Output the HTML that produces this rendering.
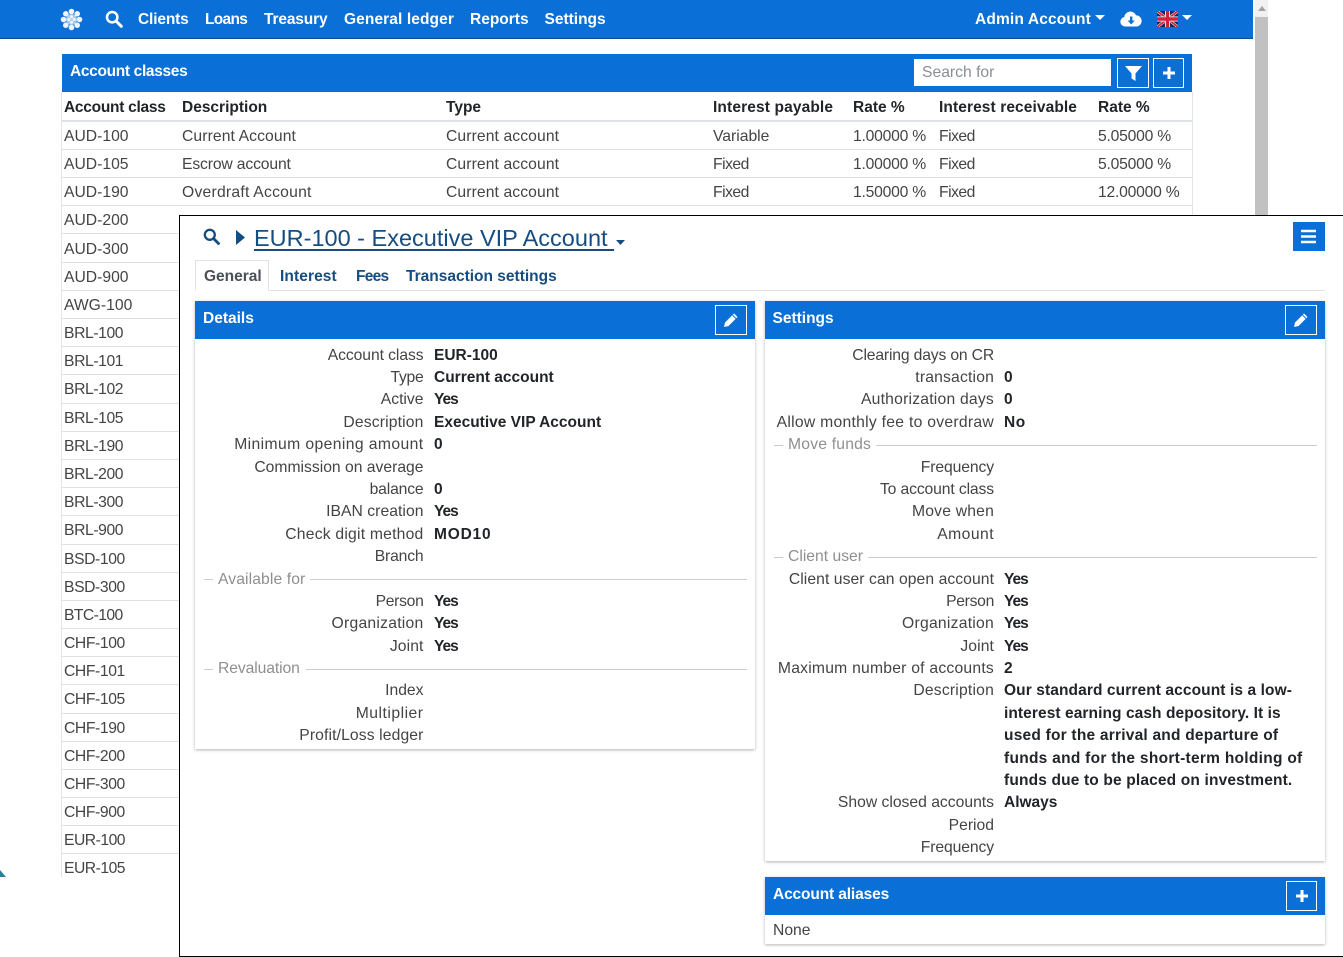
<!DOCTYPE html>
<html lang="en"><head><meta charset="utf-8"><title>Account classes</title>
<style>
html,body{margin:0;padding:0;background:#fff}
#p{position:relative;width:1343px;height:957px;overflow:hidden;font-family:"Liberation Sans",sans-serif;font-size:15.7px;color:#444;background:#fff}
.a{position:absolute}
.t{position:absolute;line-height:22px;white-space:nowrap}
.b{font-weight:bold;font-size:15.5px;color:#212529}
.w{color:#fff;font-weight:bold;font-size:15.5px}
.l{left:195px;width:228.5px;text-align:right}
.m{left:765px;width:229px;text-align:right}
.v{left:434px}.n{left:1004px}
.g{color:#8f8f8f}
.hl{position:absolute;height:1px;background:#ccc}
.rl{position:absolute;left:62px;height:1px;background:#dee2e6;width:1130px}
.bar{position:absolute;background:#0a6fd6}
.btn{position:absolute;box-sizing:border-box;border:1px solid #fff;width:32px;height:30px;display:flex;align-items:center;justify-content:center}
.card{position:absolute;background:#fff;box-shadow:0 1px 3px rgba(0,0,0,.3)}
.tab{color:#154d80;font-weight:bold;font-size:15.5px}
.i{letter-spacing:-.4px}
.y{letter-spacing:-1px}
.f{letter-spacing:-.5px}
.r{letter-spacing:-.22px}
.c{letter-spacing:.1px}
</style></head><body><div id="p">

<!-- top nav -->
<div class="a" style="left:0;top:0;width:1253px;height:39px;background:#0a6fd6;border-bottom:1px solid #0b4f96;box-sizing:border-box"></div>
<svg class="a" style="left:60px;top:8px" width="23" height="23" viewBox="0 0 23 23"><g fill="#eef5fc"><circle cx="11.5" cy="3.500" r="2.800"/><circle cx="17.200" cy="5.800" r="2.800"/><circle cx="19.500" cy="11.5" r="2.800"/><circle cx="17.200" cy="17.200" r="2.800"/><circle cx="11.5" cy="19.500" r="2.800"/><circle cx="5.800" cy="17.200" r="2.800"/><circle cx="3.500" cy="11.5" r="2.800"/><circle cx="5.800" cy="5.800" r="2.800"/><circle cx="11.5" cy="11.5" r="5.500" fill="#a9cdf2"/><circle cx="11.5" cy="8.800" r="1.500"/><circle cx="11.5" cy="14.200" r="1.500"/><circle cx="8.800" cy="11.5" r="1.500"/><circle cx="14.200" cy="11.5" r="1.500"/></g></svg>
<svg class="a" style="left:105px;top:10px" width="18" height="18" viewBox="0 0 18 18"><circle cx="7.2" cy="7.2" r="5.2" fill="none" stroke="#fff" stroke-width="2.5"/><path d="M11 11l5.3 5.3" stroke="#fff" stroke-width="3" stroke-linecap="round"/></svg>
<div class="t w" style="left:138px;top:9px;letter-spacing:-.15px">Clients</div>
<div class="t w" style="left:205px;top:9px;letter-spacing:-.7px">Loans</div>
<div class="t w" style="left:264px;top:9px;letter-spacing:-.15px">Treasury</div>
<div class="t w" style="left:344px;top:9px;letter-spacing:.1px">General ledger</div>
<div class="t w" style="left:470px;top:9px">Reports</div>
<div class="t w" style="left:544.500px;top:9px">Settings</div>
<div class="t w" style="left:975px;top:9px;letter-spacing:.15px">Admin Account</div>
<svg class="a" style="left:1095px;top:15px" width="10" height="6"><path d="M0 0h10L5 5z" fill="#fff"/></svg>
<svg class="a" style="left:1120px;top:10px" width="22" height="17" viewBox="0 0 22 17"><path d="M5 16.500a4.800 4.800 0 0 1-.8-9.500A6.200 6.200 0 0 1 16 5.200 5.700 5.700 0 0 1 17 16.500z" fill="#fff"/><path d="M10 6.500h2.400v4h2.300l-3.500 4-3.500-4H10z" fill="#0a6fd6"/></svg>
<svg class="a" style="left:1157px;top:11px" width="21" height="16" viewBox="0 0 21 16"><rect width="21" height="16" fill="#1a2260"/><path d="M0 0l21 16M21 0L0 16" stroke="#fff" stroke-width="2.800"/><path d="M0 0l21 16M21 0L0 16" stroke="#d3213a" stroke-width="1.800"/><path d="M10.500 0v16M0 8h21" stroke="#fff" stroke-width="5"/><path d="M10.500 0v16M0 8h21" stroke="#d3213a" stroke-width="3.400"/></svg>
<svg class="a" style="left:1182px;top:15px" width="10" height="6"><path d="M0 0h10L5 5z" fill="#fff"/></svg>

<!-- scrollbar -->
<div class="a" style="left:1255px;top:0;width:13px;height:216px;background:#f1f1f1"></div>
<div class="a" style="left:1255px;top:17px;width:13px;height:199px;background:#c1c1c1"></div>
<svg class="a" style="left:1258px;top:6px" width="8" height="5"><path d="M0 5L4 0l4 5z" fill="#a3a3a3"/></svg>

<!-- account classes -->
<div class="bar" style="left:62px;top:54px;width:1130px;height:38px"></div>
<div class="t w" style="left:70px;top:61px;letter-spacing:-.33px">Account classes</div>
<div class="a" style="left:914px;top:59px;width:197px;height:27px;background:#fff"></div>
<div class="t" style="left:922px;top:62px;color:#8a8f94">Search for</div>
<div class="btn" style="left:1117px;top:58px"><svg width="17" height="15" viewBox="0 0 17 15"><path d="M0 0h17L10.500 7.500V15l-4-2.500V7.500z" fill="#fff"/></svg></div>
<div class="btn" style="left:1153px;top:58px;width:31px"><svg width="14" height="14" viewBox="0 0 14 14"><path d="M7 1v12M1 7h12" stroke="#fff" stroke-width="3"/></svg></div>

<div class="a" style="left:61px;top:92px;width:1px;height:785px;background:#e4e4e4"></div>
<div class="a" style="left:1192px;top:92px;width:1px;height:124px;background:#e4e4e4"></div>
<div class="a" style="left:62px;top:120px;width:1130px;height:2px;background:#dee2e6"></div>

<div class="t b" style="left:64px;top:97px;letter-spacing:-.27px">Account class</div>
<div class="t b" style="left:182px;top:97px">Description</div>
<div class="t b" style="left:446px;top:97px">Type</div>
<div class="t b" style="left:713px;top:97px;letter-spacing:.13px">Interest payable</div>
<div class="t b" style="left:853px;top:97px">Rate %</div>
<div class="t b" style="left:939px;top:97px;letter-spacing:.1px">Interest receivable</div>
<div class="t b" style="left:1098px;top:97px">Rate %</div>

<div class="t c" style="left:182px;top:126px">Current Account</div>
<div class="t c" style="left:446px;top:126px">Current account</div>
<div class="t" style="left:713px;top:126px">Variable</div>
<div class="t r" style="left:853px;top:126px">1.00000 %</div>
<div class="t f" style="left:939px;top:126px">Fixed</div>
<div class="t r" style="left:1098px;top:126px">5.05000 %</div>
<div class="t" style="left:182px;top:154px;letter-spacing:-.14px">Escrow account</div>
<div class="t c" style="left:446px;top:154px">Current account</div>
<div class="t f" style="left:713px;top:154px">Fixed</div>
<div class="t r" style="left:853px;top:154px">1.00000 %</div>
<div class="t f" style="left:939px;top:154px">Fixed</div>
<div class="t r" style="left:1098px;top:154px">5.05000 %</div>
<div class="t" style="left:182px;top:182px;letter-spacing:.24px">Overdraft Account</div>
<div class="t c" style="left:446px;top:182px">Current account</div>
<div class="t f" style="left:713px;top:182px">Fixed</div>
<div class="t r" style="left:853px;top:182px">1.50000 %</div>
<div class="t f" style="left:939px;top:182px">Fixed</div>
<div class="t r" style="left:1098px;top:182px">12.00000 %</div>

<div class="t" style="left:64px;top:126px">AUD-100</div>
<div class="t" style="left:64px;top:154px">AUD-105</div>
<div class="t" style="left:64px;top:182px">AUD-190</div>
<div class="t" style="left:64px;top:210px">AUD-200</div>
<div class="t" style="left:64px;top:239px">AUD-300</div>
<div class="t" style="left:64px;top:267px">AUD-900</div>
<div class="t" style="left:64px;top:295px">AWG-100</div>
<div class="t i" style="left:64px;top:323px">BRL-100</div>
<div class="t i" style="left:64px;top:351px">BRL-101</div>
<div class="t i" style="left:64px;top:379px">BRL-102</div>
<div class="t i" style="left:64px;top:408px">BRL-105</div>
<div class="t i" style="left:64px;top:436px">BRL-190</div>
<div class="t i" style="left:64px;top:464px">BRL-200</div>
<div class="t i" style="left:64px;top:492px">BRL-300</div>
<div class="t i" style="left:64px;top:520px">BRL-900</div>
<div class="t i" style="left:64px;top:549px">BSD-100</div>
<div class="t i" style="left:64px;top:577px">BSD-300</div>
<div class="t i" style="left:64px;top:605px;letter-spacing:-.6px">BTC-100</div>
<div class="t i" style="left:64px;top:633px">CHF-100</div>
<div class="t i" style="left:64px;top:661px">CHF-101</div>
<div class="t i" style="left:64px;top:689px">CHF-105</div>
<div class="t i" style="left:64px;top:718px">CHF-190</div>
<div class="t i" style="left:64px;top:746px">CHF-200</div>
<div class="t i" style="left:64px;top:774px">CHF-300</div>
<div class="t i" style="left:64px;top:802px">CHF-900</div>
<div class="t i" style="left:64px;top:830px;letter-spacing:-.5px">EUR-100</div>
<div class="t i" style="left:64px;top:858px;letter-spacing:-.5px">EUR-105</div>

<div class="rl" style="top:149px"></div><div class="rl" style="top:177px"></div><div class="rl" style="top:205px"></div><div class="rl" style="top:233px"></div><div class="rl" style="top:262px"></div><div class="rl" style="top:290px"></div><div class="rl" style="top:318px"></div><div class="rl" style="top:346px"></div><div class="rl" style="top:374px"></div><div class="rl" style="top:403px"></div><div class="rl" style="top:431px"></div><div class="rl" style="top:459px"></div><div class="rl" style="top:487px"></div><div class="rl" style="top:515px"></div><div class="rl" style="top:544px"></div><div class="rl" style="top:572px"></div><div class="rl" style="top:600px"></div><div class="rl" style="top:628px"></div><div class="rl" style="top:656px"></div><div class="rl" style="top:684px"></div><div class="rl" style="top:713px"></div><div class="rl" style="top:741px"></div><div class="rl" style="top:769px"></div><div class="rl" style="top:797px"></div><div class="rl" style="top:825px"></div><div class="rl" style="top:853px"></div>

<svg class="a" style="left:0;top:870px" width="6" height="7"><path d="M0 0l6 7H0z" fill="#2a7f9e"/></svg>

<!-- overlay -->
<div class="a" style="left:179px;top:215px;width:1164px;height:742px;box-sizing:border-box;border:1px solid #000;border-right:0;background:#fff"></div>

<svg class="a" style="left:203px;top:228px" width="17" height="17" viewBox="0 0 17 17"><circle cx="6.800" cy="6.800" r="5" fill="none" stroke="#154d80" stroke-width="2.300"/><path d="M10.500 10.500l5 5" stroke="#154d80" stroke-width="2.800" stroke-linecap="round"/></svg>
<svg class="a" style="left:236px;top:230px" width="9" height="15"><path d="M0 0l9 7.500L0 15z" fill="#154d80"/></svg>
<div class="t" style="left:254px;top:221.500px;line-height:32px;font-size:23.5px;color:#154d80;text-decoration:underline;text-decoration-thickness:1.500px;text-underline-offset:3px;white-space:pre">EUR-100 - Executive VIP Account </div>
<svg class="a" style="left:616px;top:240px" width="9" height="5"><path d="M0 0h9L4.500 5z" fill="#154d80"/></svg>
<div class="a" style="left:1293px;top:222px;width:32px;height:29px;background:#0a6fd6"></div>
<svg class="a" style="left:1301px;top:229px" width="16" height="15"><path d="M0 2h15M0 7.500h15M0 13h15" stroke="#fff" stroke-width="2.600"/></svg>

<!-- tabs -->
<div class="a" style="left:195px;top:290px;width:1130px;height:1px;background:#dee2e6"></div>
<div class="a" style="left:195px;top:260px;width:74px;height:31px;box-sizing:border-box;border:1px solid #dee2e6;border-bottom:1px solid #fff;background:#fff"></div>
<div class="t b" style="left:204px;top:266px;color:#495057">General</div>
<div class="t tab" style="left:280px;top:266px;letter-spacing:.1px">Interest</div>
<div class="t tab" style="left:356px;top:266px;letter-spacing:-.75px">Fees</div>
<div class="t tab" style="left:406px;top:266px">Transaction settings</div>

<!-- Details -->
<div class="card" style="left:195px;top:301px;width:560px;height:448px"></div>
<div class="bar" style="left:195px;top:301px;width:560px;height:38px"></div>
<div class="t w" style="left:203px;top:308px">Details</div>
<div class="btn" style="left:715px;top:305px"><svg width="16" height="16" viewBox="0 0 16 16"><path d="M11 1.500l3.500 3.500-9 9L1 15l1-4.500z" fill="#fff"/><path d="M9.500 3l3.500 3.500" stroke="#0a6fd6" stroke-width="1"/></svg></div>

<div class="t l" style="top:345px;letter-spacing:-.08px">Account class</div><div class="t b v" style="top:345px">EUR-100</div>
<div class="t l" style="top:367px;letter-spacing:-.25px">Type</div><div class="t b v" style="top:367px">Current account</div>
<div class="t l" style="top:389px">Active</div><div class="t b v y" style="top:389px">Yes</div>
<div class="t l" style="top:412px;letter-spacing:.15px">Description</div><div class="t b v" style="top:412px">Executive VIP Account</div>
<div class="t l" style="top:434px;letter-spacing:.4px">Minimum opening amount</div><div class="t b v" style="top:434px">0</div>
<div class="t l" style="top:457px">Commission on average</div>
<div class="t l" style="top:479px;letter-spacing:-.15px">balance</div><div class="t b v" style="top:479px">0</div>
<div class="t l" style="top:501px;letter-spacing:.05px">IBAN creation</div><div class="t b v y" style="top:501px">Yes</div>
<div class="t l" style="top:524px;letter-spacing:.22px">Check digit method</div><div class="t b v" style="top:524px;letter-spacing:.8px">MOD10</div>
<div class="t l" style="top:546px;letter-spacing:-.15px">Branch</div>
<div class="hl" style="left:204px;top:579px;width:9px"></div><div class="t g" style="left:218px;top:569px;letter-spacing:.1px">Available for</div><div class="hl" style="left:310px;top:579px;width:437px"></div>
<div class="t l" style="top:591px;letter-spacing:-.3px">Person</div><div class="t b v y" style="top:591px">Yes</div>
<div class="t l" style="top:613px;letter-spacing:.25px">Organization</div><div class="t b v y" style="top:613px">Yes</div>
<div class="t l" style="top:636px;letter-spacing:.1px">Joint</div><div class="t b v y" style="top:636px">Yes</div>
<div class="hl" style="left:204px;top:669px;width:9px"></div><div class="t g" style="left:218px;top:658px;letter-spacing:-.1px">Revaluation</div><div class="hl" style="left:306px;top:669px;width:441px"></div>
<div class="t l" style="top:680px">Index</div>
<div class="t l" style="top:703px;letter-spacing:.5px">Multiplier</div>
<div class="t l" style="top:725px;letter-spacing:.12px">Profit/Loss ledger</div>

<!-- Settings -->
<div class="card" style="left:765px;top:301px;width:560px;height:560px"></div>
<div class="bar" style="left:765px;top:301px;width:560px;height:38px"></div>
<div class="t w" style="left:772.500px;top:308px">Settings</div>
<div class="btn" style="left:1285px;top:305px"><svg width="16" height="16" viewBox="0 0 16 16"><path d="M11 1.500l3.500 3.500-9 9L1 15l1-4.500z" fill="#fff"/><path d="M9.500 3l3.500 3.500" stroke="#0a6fd6" stroke-width="1"/></svg></div>

<div class="t m" style="top:345px;letter-spacing:-.16px">Clearing days on CR</div>
<div class="t m" style="top:367px;letter-spacing:.18px">transaction</div><div class="t b n" style="top:367px">0</div>
<div class="t m" style="top:389px;letter-spacing:.22px">Authorization days</div><div class="t b n" style="top:389px">0</div>
<div class="t m" style="top:412px;letter-spacing:.28px">Allow monthly fee to overdraw</div><div class="t b n" style="top:412px;letter-spacing:.5px">No</div>
<div class="hl" style="left:774px;top:445px;width:9px"></div><div class="t g" style="left:788px;top:434px;letter-spacing:.2px">Move funds</div><div class="hl" style="left:876px;top:445px;width:441px"></div>
<div class="t m" style="top:457px;letter-spacing:-.1px">Frequency</div>
<div class="t m" style="top:479px;letter-spacing:-.12px">To account class</div>
<div class="t m" style="top:501px;letter-spacing:.2px">Move when</div>
<div class="t m" style="top:524px;letter-spacing:.45px">Amount</div>
<div class="hl" style="left:774px;top:557px;width:9px"></div><div class="t g" style="left:788px;top:546px">Client user</div><div class="hl" style="left:868px;top:557px;width:449px"></div>
<div class="t m" style="top:569px;letter-spacing:.07px">Client user can open account</div><div class="t b n y" style="top:569px">Yes</div>
<div class="t m" style="top:591px;letter-spacing:-.3px">Person</div><div class="t b n y" style="top:591px">Yes</div>
<div class="t m" style="top:613px;letter-spacing:.25px">Organization</div><div class="t b n y" style="top:613px">Yes</div>
<div class="t m" style="top:636px;letter-spacing:.1px">Joint</div><div class="t b n y" style="top:636px">Yes</div>
<div class="t m" style="top:658px;letter-spacing:.23px">Maximum number of accounts</div><div class="t b n" style="top:658px">2</div>
<div class="t m" style="top:680px;letter-spacing:.2px">Description</div>
<div class="t b n" style="top:680px;letter-spacing:.1px">Our standard current account is a low-</div>
<div class="t b n" style="top:703px;letter-spacing:.08px">interest earning cash depository. It is</div>
<div class="t b n" style="top:725px;letter-spacing:.22px">used for the arrival and departure of</div>
<div class="t b n" style="top:748px;letter-spacing:.28px">funds and for the short-term holding of</div>
<div class="t b n" style="top:770px;letter-spacing:.16px">funds due to be placed on investment.</div>
<div class="t m" style="top:792px">Show closed accounts</div><div class="t b n" style="top:792px">Always</div>
<div class="t m" style="top:815px">Period</div>
<div class="t m" style="top:837px;letter-spacing:-.1px">Frequency</div>

<!-- Aliases -->
<div class="card" style="left:765px;top:877px;width:560px;height:67px"></div>
<div class="bar" style="left:765px;top:877px;width:560px;height:38px"></div>
<div class="t w" style="left:773px;top:884px;letter-spacing:-.13px">Account aliases</div>
<div class="btn" style="left:1286px;top:881px;width:31px"><svg width="14" height="14" viewBox="0 0 14 14"><path d="M7 1v12M1 7h12" stroke="#fff" stroke-width="3"/></svg></div>
<div class="t" style="left:773px;top:920px">None</div>

</div></body></html>
